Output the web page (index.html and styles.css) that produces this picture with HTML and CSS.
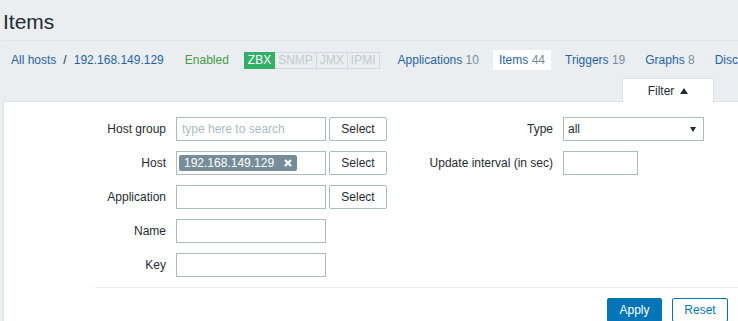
FILE: index.html
```html
<!DOCTYPE html>
<html lang="en">
<head>
    <meta charset="UTF-8">
    <title>Items</title>
    <link rel="stylesheet" href="styles.css">
</head>
<body>

<header class="page-header">
    <h1>Items</h1>
</header>

<nav class="host-nav">
    <ul class="breadcrumbs">
        <li><a href="#">All hosts</a></li>
        <li class="sep">/</li>
        <li><a href="#">192.168.149.129</a></li>
    </ul>
    <span class="status-enabled">Enabled</span>
    <div class="availability">
        <span class="badge badge-on">ZBX</span>
        <span class="badge">SNMP</span>
        <span class="badge">JMX</span>
        <span class="badge">IPMI</span>
    </div>
    <ul class="host-tabs">
        <li><a href="#">Applications</a> <span class="count">10</span></li>
        <li class="active"><a href="#">Items</a> <span class="count">44</span></li>
        <li><a href="#">Triggers</a> <span class="count">19</span></li>
        <li><a href="#">Graphs</a> <span class="count">8</span></li>
        <li><a href="#">Discovery rules</a> <span class="count">3</span></li>
    </ul>
</nav>

<div class="filter-tabs">
    <div class="filter-tab">Filter <span class="arrow-up"></span></div>
</div>

<div class="filter-panel">
    <div class="filter-columns">
        <div class="filter-col">
            <div class="form-row">
                <label class="form-label">Host group</label>
                <input type="text" class="input" placeholder="type here to search">
                <button class="btn-select">Select</button>
            </div>
            <div class="form-row">
                <label class="form-label">Host</label>
                <div class="input multiselect">
                    <span class="tag">192.168.149.129
                        <svg class="tag-remove" width="8" height="8" viewBox="0 0 8 8">
                            <path d="M1 1 L7 7 M7 1 L1 7" stroke="#fff" stroke-width="2.2"/>
                        </svg>
                    </span>
                </div>
                <button class="btn-select">Select</button>
            </div>
            <div class="form-row">
                <label class="form-label">Application</label>
                <input type="text" class="input">
                <button class="btn-select">Select</button>
            </div>
            <div class="form-row">
                <label class="form-label">Name</label>
                <input type="text" class="input">
            </div>
            <div class="form-row">
                <label class="form-label">Key</label>
                <input type="text" class="input">
            </div>
        </div>

        <div class="filter-col filter-col-right">
            <div class="form-row">
                <label class="form-label">Type</label>
                <div class="select-box">
                    <select class="select">
                        <option>all</option>
                    </select>
                </div>
            </div>
            <div class="form-row">
                <label class="form-label">Update interval (in sec)</label>
                <input type="text" class="input input-short">
            </div>
        </div>
    </div>

    <div class="filter-footer">
        <button class="btn-apply">Apply</button>
        <button class="btn-reset">Reset</button>
    </div>
</div>

</body>
</html>
```

FILE: styles.css
```css
body {
    font-family: "Liberation Sans", Arial, sans-serif;
    font-size: 12px;
    margin: 0;
    padding: 0;
    background: #ebeef0;
    color: #1f2c33;
    overflow: hidden;
}

a {
    color: #1f65a6;
    text-decoration: none;
}

ul {
    list-style: none;
    margin: 0;
    padding: 0;
}

/* Header */
.page-header {
    margin-left: 3px;
    height: 40px;
    border-bottom: 1px solid #dfe4e7;
}

.page-header h1 {
    margin: 0;
    padding-top: 10px;
    font-size: 21px;
    font-weight: normal;
    line-height: 24px;
}

/* Host navigation */
.host-nav {
    display: flex;
    align-items: center;
    height: 20px;
    margin-top: 9px;
    padding-left: 11px;
    line-height: 14px;
    white-space: nowrap;
    overflow: hidden;
}

.breadcrumbs {
    display: flex;
}

.breadcrumbs .sep {
    margin: 0 7px;
    color: #1f2c33;
}

.status-enabled {
    color: #429e47;
    margin-left: 21px;
}

.availability {
    display: flex;
    margin-left: 15px;
}

.badge {
    display: inline-block;
    padding: 1px 3px;
    border: 1px solid #d2d9dd;
    color: #c2cacf;
    line-height: 13px;
    margin-left: -1px;
}

.badge-on {
    background: #34af67;
    border-color: #34af67;
    color: #fff;
    margin-left: 0;
    position: relative;
}

.host-tabs {
    display: flex;
    gap: 8px;
    margin-left: 12px;
}

.host-tabs li {
    padding: 3px 6px;
}

.host-tabs li.active {
    background: #fff;
}

.host-tabs .count {
    color: #768d99;
}

/* Filter */
.filter-tabs {
    display: flex;
    justify-content: flex-end;
    margin-top: 8px;
    padding-right: 24px;
}

.filter-tab {
    width: 92px;
    height: 24px;
    margin-bottom: -1px;
    background: #fff;
    border: 1px solid #dfe4e7;
    border-bottom: none;
    display: flex;
    justify-content: center;
    align-items: center;
    gap: 6px;
    line-height: 14px;
    position: relative;
    z-index: 1;
    padding-top: 1px;
    box-sizing: border-box;
}

.arrow-up {
    width: 0;
    height: 0;
    border-left: 4px solid transparent;
    border-right: 4px solid transparent;
    border-bottom: 6px solid #1f2c33;
    margin-top: -1px;
}

.filter-panel {
    margin-left: 3px;
    background: #fff;
    border-top: 1px solid #dfe4e7;
    border-left: 1px solid #dfe4e7;
    padding-top: 15px;
}

.filter-columns {
    display: flex;
}

.filter-col {
    display: flex;
    flex-direction: column;
    gap: 10px;
}

.form-row {
    display: flex;
    align-items: center;
    height: 24px;
}

.form-label {
    width: 162px;
    margin-right: 10px;
    text-align: right;
    white-space: nowrap;
}

.filter-col-right .form-label {
    width: 166px;
}

.input {
    box-sizing: border-box;
    width: 150px;
    height: 24px;
    margin: 0;
    padding: 0 5px;
    border: 1px solid #acbbc2;
    background: #fff;
    font-family: inherit;
    font-size: 12px;
    color: #1f2c33;
    outline: none;
}

.input::placeholder {
    color: #acbbc2;
}

.input-short {
    width: 75px;
}

.multiselect {
    display: flex;
    align-items: center;
    padding: 0 2px;
}

.tag {
    display: inline-flex;
    align-items: center;
    gap: 10px;
    height: 16px;
    padding: 0 5px;
    background: #768d99;
    color: #fff;
    border-radius: 2px;
    white-space: nowrap;
}

.btn-select {
    box-sizing: border-box;
    width: 58px;
    height: 24px;
    margin-left: 3px;
    padding: 0;
    background: #fff;
    border: 1px solid #acbbc2;
    border-radius: 2px;
    font-family: inherit;
    font-size: 12px;
    color: #1f2c33;
}

.select-box {
    position: relative;
}

.select {
    box-sizing: border-box;
    width: 141px;
    height: 24px;
    margin: 0;
    padding: 0 4px;
    border: 1px solid #acbbc2;
    border-radius: 0;
    background: #fff;
    font-family: inherit;
    font-size: 12px;
    color: #1f2c33;
    appearance: none;
    -webkit-appearance: none;
}

.select-box::after {
    content: "";
    position: absolute;
    right: 8px;
    top: 10px;
    border-left: 3.5px solid transparent;
    border-right: 3.5px solid transparent;
    border-top: 5px solid #1f2c33;
}

.filter-footer {
    display: flex;
    justify-content: flex-end;
    gap: 10px;
    margin-top: 10px;
    margin-left: 91px;
    padding: 10px 10px 10px 0;
    border-top: 1px solid #ebeef0;
}

.btn-apply, .btn-reset {
    box-sizing: border-box;
    height: 24px;
    padding: 0;
    border-radius: 2px;
    font-family: inherit;
    font-size: 12px;
}

.btn-apply {
    width: 55px;
    background: #0275b8;
    border: 1px solid #0275b8;
    color: #fff;
}

.btn-reset {
    width: 56px;
    background: #fff;
    border: 1px solid #0275b8;
    color: #0275b8;
}
```
